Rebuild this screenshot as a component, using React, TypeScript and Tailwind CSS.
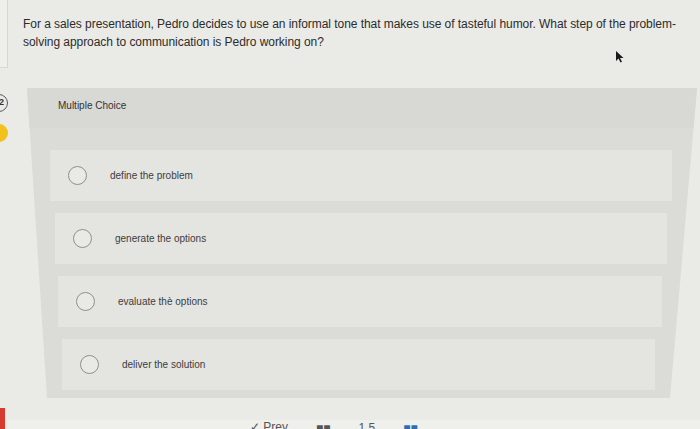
export default function App() {
  const options = [
    { label: "define the problem", cls: "ml-[23px] mr-[25px]" },
    { label: "generate the options", cls: "ml-[28px] mr-[30px]" },
    { label: "evaluate thè options", cls: "ml-[31px] mr-[35px]" },
    { label: "deliver the solution", cls: "ml-[35px] mr-[42px]" },
  ];
  return (
    <div className="relative flex h-[429px] w-[700px] overflow-hidden bg-[#eaeae7] font-['Liberation_Sans',Arial,sans-serif]">
      {/* left sidebar edge */}
      <div className="flex w-[8px] shrink-0 flex-col">
        <div className="h-[68px] border-b border-r border-[#d6d6d3] bg-[#eeeeeb]" />
        <div className="-ml-[10px] mt-[26px] flex h-[18px] w-[18px] items-center justify-end rounded-full border border-[#5a5a5a] pr-[3px] text-[9px] font-bold text-[#333]">
          2
        </div>
        <div className="-ml-[10px] mt-[12px] h-[18px] w-[18px] rounded-full bg-[#f2c11c]" />
        <div className="mt-auto h-[21px] w-[5px] bg-[#d63b2f]" />
      </div>

      {/* main */}
      <div className="flex flex-1 flex-col">
        <p className="whitespace-nowrap pl-[15px] pt-[15px] text-[12px] leading-[18px] tracking-[-0.05px] text-[#2c2c2c]">
          For a sales presentation, Pedro decides to use an informal tone that makes use of tasteful humor. What step of the problem-
          <br />
          solving approach to communication is Pedro working on?
        </p>

        <div className="ml-[19px] mr-[3px] mt-[37px] bg-[#dbdbd8] pb-[8px] [clip-path:polygon(0_0,100%_0,calc(100%-27px)_100%,20px_100%)]">
          <div className="h-[40px] bg-[#d8d8d5] pl-[31px] pt-[11px] text-[10px] leading-[13px] text-[#333]">
            Multiple Choice
          </div>
          <div className="flex flex-col gap-[12px] pt-[22px]">
            {options.map((o) => (
              <div key={o.label} className={`flex h-[51px] items-center bg-[#e4e4e1] pl-[18px] ${o.cls}`}>
                <div className="h-[19px] w-[19px] shrink-0 rounded-full border-[1.5px] border-[#8e8e8c] bg-[#e9e9e6]" />
                <span className="ml-[23px] text-[10px] text-[#3d3d3d]">{o.label}</span>
              </div>
            ))}
          </div>
        </div>

        <div className="flex flex-1 flex-col justify-end">
          <div className="flex h-[9px] items-start gap-[28px] overflow-hidden bg-[#efefec] pl-[242px]">
            <span className="mt-[1px] text-[12px] leading-[12px] text-[#555]">✓ Prev</span>
            <span className="mt-[2px] text-[12px] leading-[12px] text-[#555]">■■</span>
            <span className="mt-[2px] text-[12px] leading-[12px] text-[#555]">1 5</span>
            <span className="mt-[2px] text-[12px] leading-[12px] text-[#2f6db5]">■■</span>
          </div>
        </div>
      </div>

      {/* mouse cursor */}
      <svg className="absolute left-[615px] top-[51px]" width="9" height="12" viewBox="0 0 9 12">
        <path d="M1 0 L1 10 L3.5 7.5 L5.5 11.5 L7 10.8 L5 7 L8.5 7 Z" fill="#1a1a1a" />
      </svg>
    </div>
  );
}
